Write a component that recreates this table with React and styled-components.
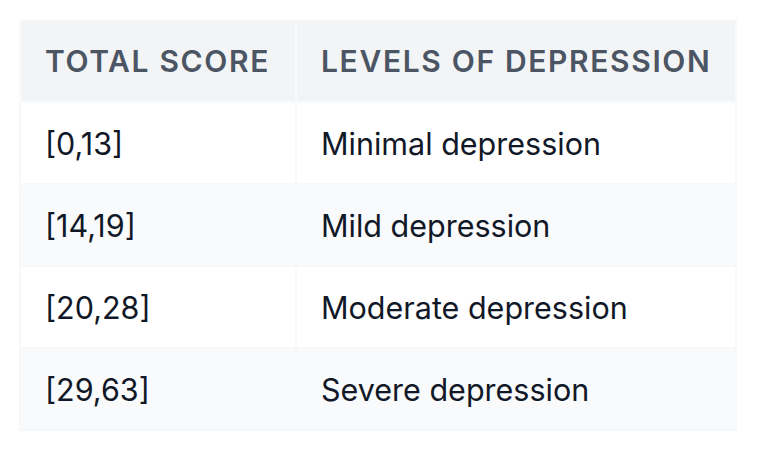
import React from "react";
import styled, { createGlobalStyle } from "styled-components";

const GlobalStyle = createGlobalStyle`
  html, body {
    margin: 0;
    padding: 0;
    background: #ffffff;
    font-family: Inter, "Noto Sans", sans-serif;
  }
`;

const Page = styled.div`
  padding: 19px 25px 19px 19px;
`;

const Table = styled.table`
  width: 718px;
  border-collapse: collapse;
  table-layout: fixed;
`;

const HeadCell = styled.th`
  width: ${(p) => p.$width || "auto"};
  height: 82px;
  box-sizing: border-box;
  padding: 0 24px;
  text-align: left;
  white-space: nowrap;
  background: #f3f4f6;
  border: 2px solid #f9fafb;
  color: #4b5563;
  font-size: 30px;
  font-weight: 600;
  letter-spacing: 0.055em;
  text-transform: uppercase;
`;

const Row = styled.tr`
  background: ${(p) => (p.$striped ? "#f9fafb" : "#ffffff")};
`;

const Cell = styled.td`
  height: 82px;
  box-sizing: border-box;
  padding: 0 24px;
  white-space: nowrap;
  border: 2px solid #f7f8f9;
  color: #111827;
  font-size: 30.5px;
  font-weight: 400;
`;

const rows = [
  ["[0,13]", "Minimal depression"],
  ["[14,19]", "Mild depression"],
  ["[20,28]", "Moderate depression"],
  ["[29,63]", "Severe depression"],
];

const App = () => {
  return (
    <Page>
      <GlobalStyle />
      <Table>
        <thead>
          <tr>
            <HeadCell $width="276px">Total Score</HeadCell>
            <HeadCell>Levels of Depression</HeadCell>
          </tr>
        </thead>
        <tbody>
          {rows.map((r, i) => (
            <Row key={i} $striped={i % 2 === 1}>
              <Cell>{r[0]}</Cell>
              <Cell>{r[1]}</Cell>
            </Row>
          ))}
        </tbody>
      </Table>
    </Page>
  );
};

export default App;
